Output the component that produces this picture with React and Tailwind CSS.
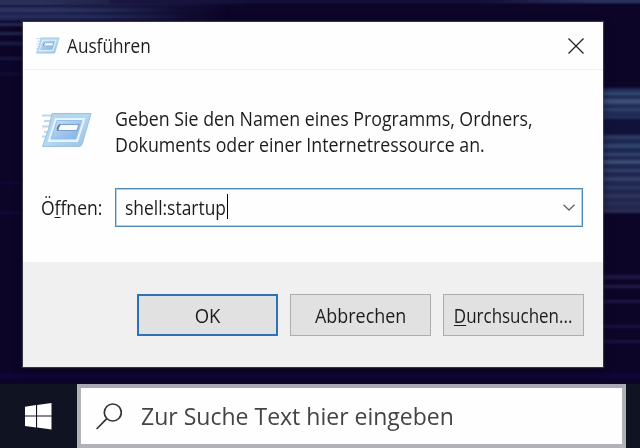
import React from 'react';

function RunIcon({ className }) {
  return (
    <svg viewBox="0 0 52 36" className={className} fill="none">
      <defs>
        <linearGradient id="frame" x1="0" y1="0" x2="1" y2="1">
          <stop offset="0" stopColor="#b4d3ea" />
          <stop offset="0.5" stopColor="#b3d8f3" />
          <stop offset="1" stopColor="#9dbedb" />
        </linearGradient>
        <linearGradient id="panel" x1="0" y1="0" x2="1" y2="1">
          <stop offset="0" stopColor="#c4e0f6" />
          <stop offset="1" stopColor="#7eb0e6" />
        </linearGradient>
      </defs>
      <path d="M2 3.500h12M4 9h9M2 14.500h9M4 20h6M2 24.500h6" stroke="#bcd8ee" strokeWidth="1.800" />
      <path d="M12 1.500H51L42.500 31q-.8 3.500-3.500 3.500H2.500L8.500 17z" fill="url(#frame)" stroke="#9cc2df" strokeWidth="1" />
      <path d="M15 6H45.500L38 30H7.500z" fill="#e6f4fe" />
      <path d="M17 8.500H42L36 27H11z" fill="url(#panel)" stroke="#94bfe8" strokeWidth="1" />
      <path d="M20 12.500h19l-2 6H17.500z" fill="#f7faff" stroke="#7f9fc8" strokeWidth="1.100" />
      <path d="M20 12.500q-3.500 3-2 6" stroke="#5a7dad" strokeWidth="1.600" />
    </svg>
  );
}

function TitleBar() {
  return (
    <header className="flex h-[48px] shrink-0 items-center border-b border-[#f1f1f3] pl-[12px] pr-[19px]">
      <RunIcon className="h-[17px] w-[25px] shrink-0" />
      <h1 className="ml-[7px] w-[200px] origin-left scale-x-[0.882] whitespace-nowrap text-[19.500px] leading-6 text-[#1c1c1c]">Ausführen</h1>
      <svg viewBox="0 0 16 16" className="ml-auto h-4 w-4" stroke="#222" strokeWidth="1.300">
        <path d="M.5.5l15 15M15.500.5l-15 15" />
      </svg>
    </header>
  );
}

function DialogButton({ primary, labelClass, children }) {
  return (
    <button
      className={
        'flex h-[42px] w-[141px] items-center justify-center bg-[#e1e1e1] pt-[2px] text-[19.500px] text-[#1c1c1c] ' +
        (primary ? 'border-[2px] border-[#2c72b5]' : 'border border-[#adadad]')
      }
    >
      <span className={'block whitespace-nowrap ' + labelClass}>{children}</span>
    </button>
  );
}

function RunDialog() {
  return (
    <section className="ml-[23px] mt-[22px] flex h-[345px] w-[580px] flex-col bg-[#fefefe] shadow-[0_0_1px_1px_rgba(90,90,110,0.55),0_3px_8px_rgba(0,0,0,0.5)]">
      <TitleBar />
      <div className="flex flex-1 flex-col pl-[17px]">
        <div className="flex pt-[36px]">
          <RunIcon className="mt-[6px] h-[36px] w-[52px] shrink-0" />
          <p className="ml-[23px] w-[480px] origin-left scale-x-[0.912] whitespace-nowrap text-[19.500px] leading-[26px] text-[#1c1c1c]">
            Geben Sie den Namen eines Programms, Ordners,
            <br />
            Dokuments oder einer Internetressource an.
          </p>
        </div>
        <div className="mt-[30px] flex items-center">
          <label className="w-[75px] origin-left scale-x-[0.9] whitespace-nowrap pl-px text-[19.500px] text-[#1c1c1c] [font-variant-ligatures:none]">
            Ö<span className="underline decoration-1 underline-offset-2">f</span>fnen:
          </label>
          <div className="flex h-[39px] w-[468px] items-center border border-[#4d8bb5] pl-[9px] pr-[7px] shadow-[inset_0_0_0_1px_rgba(77,139,181,0.4)]">
            <span className="w-[102px] origin-left scale-x-[0.893] whitespace-nowrap text-[19.500px] text-[#1c1c1c]">shell:startup</span>
            <span className="-mt-[2px] h-[25px] w-px bg-black" />
            <svg viewBox="0 0 12 7" className="ml-auto h-[7px] w-[12px]" fill="none" stroke="#666" strokeWidth="1.300">
              <path d="M.5.7L6 6l5.500-5.300" />
            </svg>
          </div>
        </div>
      </div>
      <footer className="flex h-[105px] shrink-0 justify-end gap-[12px] bg-[#f0f0f0] pr-[19px] pt-[32px]">
        <DialogButton primary labelClass="scale-x-[0.95]">OK</DialogButton>
        <DialogButton labelClass="scale-x-[0.92]">Abbrechen</DialogButton>
        <DialogButton labelClass="scale-x-[0.87]">
          <span className="underline decoration-1 underline-offset-2">D</span>urchsuchen...
        </DialogButton>
      </footer>
    </section>
  );
}

function Taskbar() {
  return (
    <nav className="mt-auto flex h-[64px] shrink-0 bg-[#101322]">
      <div className="flex w-[77px] items-start pl-[25px] pt-[19px]">
        <svg viewBox="0 0 27 27" className="h-[27px] w-[27px]" fill="#fff">
          <path d="M0 3.800L11 2.100V12.500H0zM12.100 1.900L26.500 0V12.500H12.100zM0 13.600H11V24.400L0 22.900zM12.100 13.600H26.500V26.500L12.100 24.600z" />
        </svg>
      </div>
      <div className="flex w-[549px] items-center border-4 border-[#b2b2b6] border-t-[#aaa6b8] bg-[#fefefe] pl-[15px]">
        <svg viewBox="0 0 26 27" className="h-[27px] w-[26px] shrink-0" fill="none" stroke="#333" strokeWidth="1.700">
          <circle cx="16.800" cy="9.500" r="8.500" />
          <path d="M10.800 15.700L.6 26" />
        </svg>
        <span className="ml-[19px] origin-left scale-x-[0.959] whitespace-nowrap text-[24px] leading-8 text-[#444]">Zur Suche Text hier eingeben</span>
      </div>
    </nav>
  );
}

// Blurred horizontal light streaks of the wallpaper: [left, top, width, height, background]
const streaks = [
  [-10, -2, 260, 8, 'linear-gradient(90deg,#2a305a 20%,#2a305a00)'],
  [110, 0, 540, 3, '#171440'],
  [-10, 6, 240, 15, 'linear-gradient(90deg,#1d2250 30%,#1d225000)'],
  [-10, 8, 190, 4, 'linear-gradient(90deg,#2f3662 30%,#2f366200)'],
  [-10, 15, 200, 3, 'linear-gradient(90deg,#2a305a 50%,#2a305a00)'],
  [-10, 23, 40, 3, '#252b55'],
  [-10, 32, 40, 3, '#232850'],
  [-10, 42, 40, 3, '#1c214a'],
  [-10, 57, 40, 3, '#151a42'],
  [-10, 73, 40, 2, '#12123c'],
  [-10, 182, 36, 2, '#120b3a'],
  [-10, 212, 36, 2, '#150b42'],
  [480, -1, 170, 4, 'linear-gradient(270deg,#2b3862 30%,#2b386200)'],
  [600, 88, 50, 32, '#202d56'],
  [600, 92, 50, 3, '#374a72'],
  [600, 99, 50, 5, '#3b4f78'],
  [600, 108, 50, 3, '#304069'],
  [600, 120, 50, 14, '#11123c'],
  [600, 134, 50, 79, '#1e2850'],
  [600, 136, 50, 3, '#2d3c66'],
  [600, 144, 50, 4, '#304570'],
  [600, 153, 50, 3, '#304771'],
  [600, 160, 50, 4, '#3b4e78'],
  [600, 169, 50, 3, '#324069'],
  [600, 177, 50, 4, '#343f69'],
  [600, 186, 50, 3, '#30365f'],
  [600, 194, 50, 4, '#31345d'],
  [600, 202, 50, 3, '#302e55'],
  [600, 209, 50, 3, '#302a50'],
  [600, 275, 50, 4, '#201844'],
  [600, 285, 50, 3, '#251c48'],
  [600, 300, 50, 3, '#1e1740'],
  [600, 325, 50, 3, '#1a1340'],
  [600, 340, 50, 3, '#1b1440'],
  [-10, 373, 660, 6, '#110638'],
];

function Wallpaper() {
  return (
    <div className="absolute inset-0 overflow-hidden bg-[#0d0528]">
      {streaks.map(([left, top, width, height, background], i) => (
        <div key={i} className="absolute blur-[1px]" style={{ left, top, width, height, background }} />
      ))}
    </div>
  );
}

export default function App() {
  return (
    <main className="relative h-[448px] w-[640px] overflow-hidden font-['Open_Sans','Noto_Sans',sans-serif]">
      <Wallpaper />
      <div className="relative flex h-full flex-col">
        <RunDialog />
        <Taskbar />
      </div>
    </main>
  );
}
